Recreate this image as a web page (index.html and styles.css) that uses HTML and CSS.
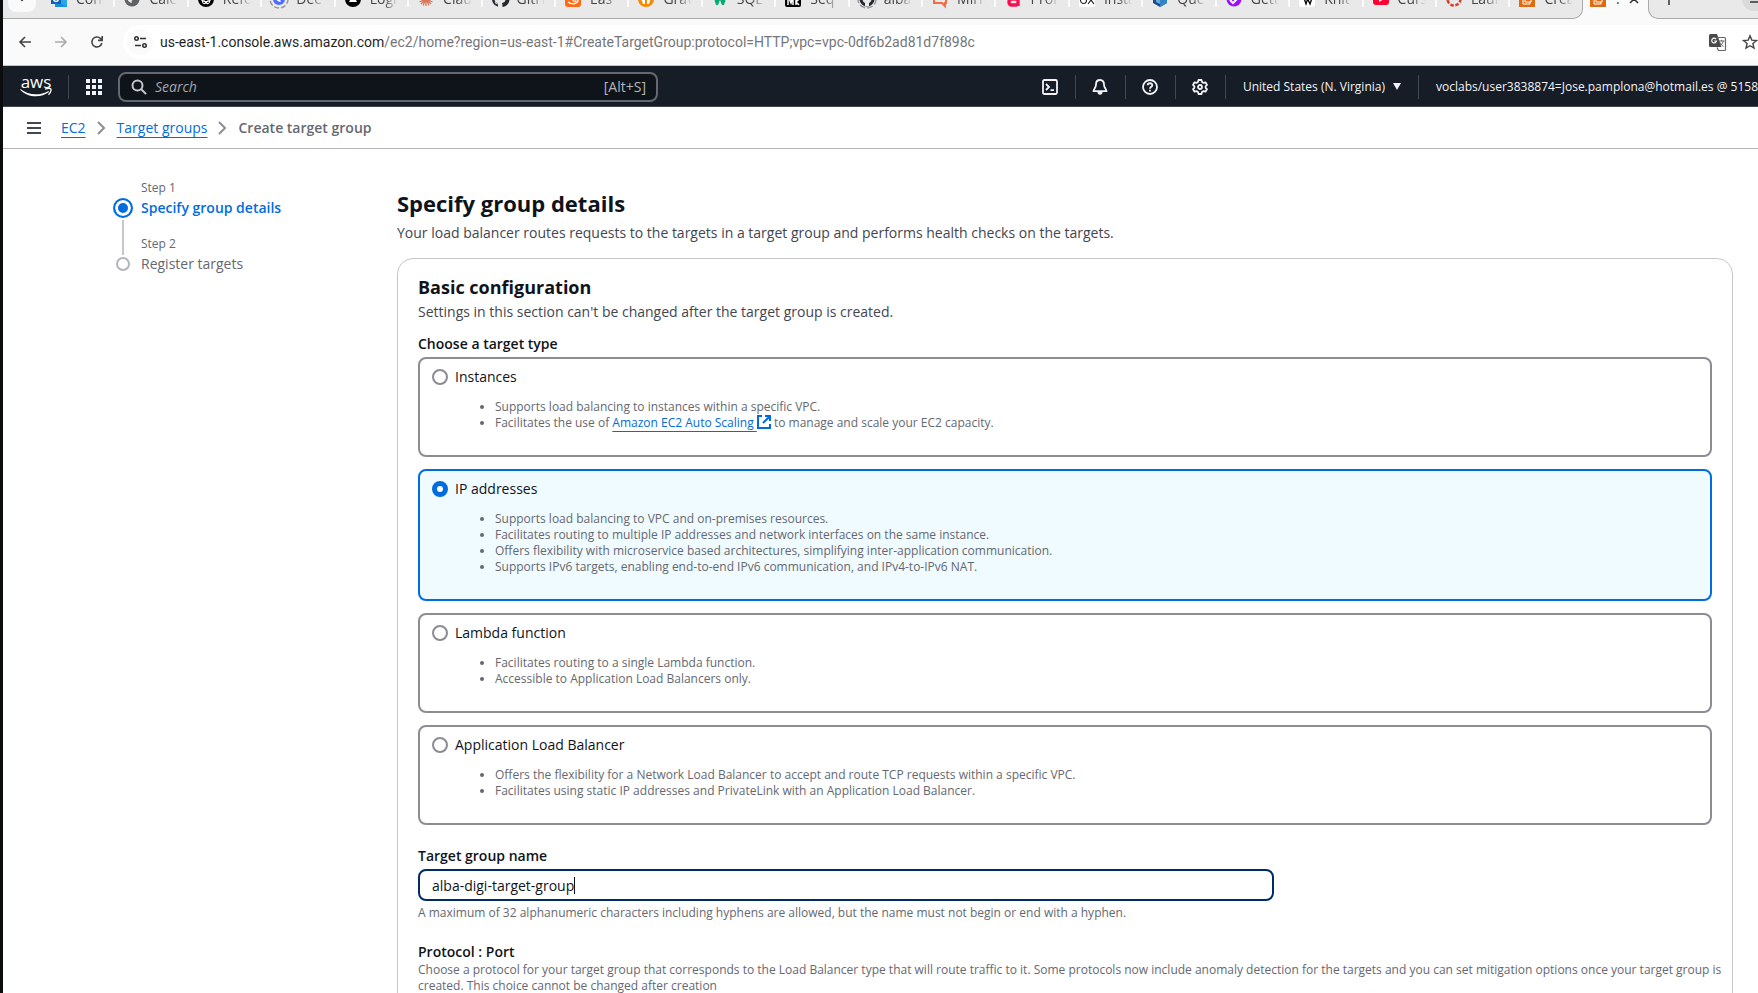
FILE: index.html
```html
<!DOCTYPE html>
<html lang="en">
<head>
<meta charset="utf-8">
<title>Create target group | EC2 | us-east-1</title>
<link rel="stylesheet" href="styles.css">
</head>
<body>
<div class="window">
  <div class="tabstrip">
    <button class="tab-search" aria-label="Search tabs"><svg width="28" height="28" viewBox="0 0 28 28"><rect width="28" height="28" rx="8" fill="#fafafa"/><path d="M10 12l4 4 4-4" fill="none" stroke="#333" stroke-width="2"/></svg></button>
    <div class="tabs">
      <button class="tab"><svg class="fav" viewBox="0 0 16 16"><path d="M4 0h12v16H4z" fill="#28a8ea"/><path d="M4 9l12 7H4z" fill="#1490df"/><path d="M0 3h10v10H0z" fill="#0f5fb5"/><circle cx="5" cy="8" r="2.4" fill="none" stroke="#fff" stroke-width="1.5"/></svg><span class="tab-text">Conf</span></button>
      <button class="tab"><svg class="fav" viewBox="0 0 16 16"><circle cx="8" cy="8" r="7.5" fill="#5f6368"/><path d="M8 3c4 0 4 3 2 5s-3 1-2 4c-4-1-5-4-5-6z" fill="#eee"/></svg><span class="tab-text">Calc</span></button>
      <button class="tab"><svg class="fav" viewBox="0 0 16 16"><circle cx="8" cy="8" r="8" fill="#000"/><g fill="none" stroke="#fff"><ellipse cx="8" cy="8" rx="5" ry="2.6"/><ellipse cx="8" cy="8" rx="5" ry="2.6" transform="rotate(60 8 8)"/><ellipse cx="8" cy="8" rx="5" ry="2.6" transform="rotate(120 8 8)"/></g></svg><span class="tab-text">Refe</span></button>
      <button class="tab"><svg class="fav" viewBox="0 0 16 16"><circle cx="8" cy="8" r="9" fill="none" stroke="#999" stroke-width="1.5" stroke-dasharray="5 2"/><circle cx="8" cy="8" r="6" fill="#4d6bfe"/><path d="M4 5c3 0 5 3 6 6-3 0-6-2-6-6z" fill="#fff"/></svg><span class="tab-text">Dee</span></button>
      <button class="tab"><svg class="fav" viewBox="0 0 16 16"><circle cx="8" cy="8" r="8" fill="#000"/><path d="M8 3l4 8H4z" fill="#fff"/></svg><span class="tab-text">Logi</span></button>
      <button class="tab"><svg class="fav" viewBox="0 0 16 16"><path d="M8 1v14M1 8h14M3 3l10 10M13 3L3 13M5 1.500l6 13M11 1.500l-6 13M1.500 5l13 6M1.500 11l13-6" stroke="#d97757" stroke-width="1.3"/></svg><span class="tab-text">Clau</span></button>
      <button class="tab"><svg class="fav" viewBox="0 0 16 16"><path d="M8 0a8 8 0 0 0-2.500 15.600c.4 0 .5-.2.5-.4v-2C3.700 13.700 3.300 12 3.300 12c-.4-.9-1-1.200-1-1.200 1-.4 1.900 1 1.900 1 .6 1.100 1.700.8 2.100.6-1.800-.6-3.800-1.200-3.800-4.300 0-3 2-4.200 5.500-4.200s5.500 1.200 5.500 4.200-2 3.800-3.700 4c.3.300.6.800.6 1.600v1.900c0 .2.100.4.5.4A8 8 0 0 0 8 0z" fill="#24292f"/></svg><span class="tab-text">GitH</span></button>
      <button class="tab"><svg class="fav" viewBox="0 0 16 16"><rect width="16" height="16" rx="3" fill="#ff6a13"/><path d="M3 11c4 3 9 2 10-1 1-4-5-4-5-1 0 2 3 2 3 0" fill="none" stroke="#fff" stroke-width="1.300"/></svg><span class="tab-text">Eas</span></button>
      <button class="tab"><svg class="fav" viewBox="0 0 16 16"><circle cx="8" cy="8" r="8" fill="#f58a07"/><path d="M3 7h4v6H5zM9 7h4l-2 6H9z" fill="#fff"/></svg><span class="tab-text">Grav</span></button>
      <button class="tab"><svg class="fav" viewBox="0 0 16 16"><path d="M1 4h3l1.500 5L7 4h2l1.500 5L12 4h3l-3 10h-2L8 9l-2 5H4z" fill="#04aa6d"/></svg><span class="tab-text">SQL</span></button>
      <button class="tab"><svg class="fav" viewBox="0 0 16 16"><rect width="16" height="16" rx="2" fill="#000"/><path d="M3 14V5l3 7 2-7v9M11 14V5M14 8l-3 3 3 3" stroke="#fff" fill="none" stroke-width="1.500"/></svg><span class="tab-text">Seq</span></button>
      <button class="tab"><svg class="fav" viewBox="0 0 16 16"><circle cx="8" cy="8" r="9" fill="none" stroke="#999" stroke-width="1.500" stroke-dasharray="6 2"/><circle cx="8" cy="8" r="6" fill="none" stroke="#24292f" stroke-width="3"/><path d="M6 15v-3h4v3z" fill="#eee"/></svg><span class="tab-text">alba</span></button>
      <button class="tab"><svg class="fav" viewBox="0 0 16 16"><path d="M2 2h12v10h-1v3l-3-3H2z" fill="none" stroke="#f26b43" stroke-width="2"/></svg><span class="tab-text">Miriv</span></button>
      <button class="tab"><svg class="fav" viewBox="0 0 16 16"><path d="M4 4h6q3 0 3 3v8M12 8H7q-3 0-3 3t3 3h5" fill="none" stroke="#f5114f" stroke-width="3.400"/></svg><span class="tab-text">Prof</span></button>
      <button class="tab"><svg class="fav" viewBox="0 0 16 16"><path d="M0 0h16v16H0z" fill="#fff"/><ellipse cx="4.500" cy="9" rx="3" ry="3.500" fill="none" stroke="#222" stroke-width="1.200"/><path d="M9 5l6 8M15 5l-6 8" stroke="#222" stroke-width="1.200"/></svg><span class="tab-text">Insta</span></button>
      <button class="tab"><svg class="fav" viewBox="0 0 16 16"><path d="M8 0l7 4v8l-7 4-7-4V4z" fill="#1a4f86"/><path d="M8 8l7-4v8l-7 4z" fill="#3584c6"/><path d="M4 6l4 2v5l-4-2z" fill="#67a9dd"/></svg><span class="tab-text">Que</span></button>
      <button class="tab"><svg class="fav" viewBox="0 0 16 16"><circle cx="8" cy="8" r="7.500" fill="#9810fa"/><path d="M4 9l3 3 6-6" fill="none" stroke="#fff" stroke-width="2"/></svg><span class="tab-text">Gett</span></button>
      <button class="tab"><svg class="fav" viewBox="0 0 16 16"><rect width="16" height="16" rx="3" fill="#fff"/><path d="M2 4h4M7 4h3M12 4h2M4 4l3 9 2-6M7 4l4 9 3-9" fill="none" stroke="#000" stroke-width="1.300"/></svg><span class="tab-text">Knit</span></button>
      <button class="tab"><svg class="fav" viewBox="0 0 16 16"><rect y="2" width="16" height="12" rx="3" fill="#f03"/><path d="M6 5l5 3-5 3z" fill="#fff"/></svg><span class="tab-text">Curs</span></button>
      <button class="tab"><svg class="fav" viewBox="0 0 16 16"><circle cx="8" cy="8" r="6.500" fill="none" stroke="#e03a2d" stroke-width="2.500" stroke-dasharray="3.500 1.600"/></svg><span class="tab-text">Laun</span></button>
      <button class="tab"><svg class="fav" viewBox="0 0 16 16"><path d="M0 0h16v16H0z" fill="#dd6b10"/><path d="M4 6v7h7v-2M6 4v7h6V7" fill="none" stroke="#fff"/></svg><span class="tab-text">Crea</span></button>
    </div>
    <button class="tab tab-active"><svg class="fav" viewBox="0 0 16 16"><path d="M0 0h16v16H0z" fill="#dd6b10"/><path d="M4 6v7h7v-2M6 4v7h6V7" fill="none" stroke="#fff"/></svg><span class="tab-dot">:</span><svg width="8" height="8" viewBox="0 0 8 8"><path d="M0 0l8 8M8 0L0 8" stroke="#333" stroke-width="1.500"/></svg></button>
    <div class="tab-rest">
      <button class="tab-new" aria-label="New tab"><svg width="12" height="12" viewBox="0 0 12 12"><path d="M6 0v12M0 6h12" stroke="#333" stroke-width="1.500"/></svg></button>
      <button class="tab-min" aria-label="Minimize"><svg width="8" height="8" viewBox="0 0 8 8"><path d="M0 7h8" stroke="#333" stroke-width="1.500"/></svg></button>
    </div>
  </div>

  <div class="toolbar">
    <button class="tool" aria-label="Back"><svg width="12" height="12" viewBox="0 0 12 12"><path d="M12 6H1M6 1L1 6l5 5" fill="none" stroke="#444" stroke-width="1.600"/></svg></button>
    <button class="tool" aria-label="Forward"><svg width="12" height="12" viewBox="0 0 12 12"><path d="M0 6h11M6 1l5 5-5 5" fill="none" stroke="#aaa" stroke-width="1.600"/></svg></button>
    <button class="tool" aria-label="Reload"><svg width="12" height="12" viewBox="0 0 12 12"><path d="M10.800 7A5 5 0 1 1 9.500 2.500L11 4M11.200 0v4.400H7" fill="none" stroke="#444" stroke-width="1.600"/></svg></button>
    <div class="omnibox">
      <button class="site-info" aria-label="Site information"><svg width="13" height="12" viewBox="0 0 13 12"><g fill="none" stroke="#333" stroke-width="1.600"><circle cx="2.500" cy="2.500" r="1.700"/><circle cx="10.500" cy="9.500" r="1.700"/><path d="M6 2.500h6M1 9.500h6"/></g></svg></button>
      <span class="url"><span class="url-host">us-east-1.console.aws.amazon.com</span>/ec2/home?region=us-east-1#CreateTargetGroup:protocol=HTTP;vpc=vpc-0df6b2ad81d7f898c</span>
      <button class="omni-btn" aria-label="Translate"><svg width="17" height="17" viewBox="0 0 17 17"><path d="M1.500 0H8l4.500 13h-11Q0 13 0 11.500v-10Q0 0 1.500 0z" fill="#4a4a4a"/><path d="M8.500 3.500h7q1 0 1 1v11q0 1-1 1H9.500L8 13.500" fill="none" stroke="#666" stroke-width="1.200"/><path d="M7 5A2.400 2.400 0 1 0 7.500 7H5.200" fill="none" stroke="#fff" stroke-width="1.200"/><path d="M9.500 7h6M12.500 5.800V7M14.500 7q-1 3-3.500 5M11 8.500q1 2.500 3.500 4" fill="none" stroke="#666"/></svg></button>
      <button class="omni-btn" aria-label="Bookmark"><svg width="16" height="16" viewBox="0 0 16 16"><path d="M8 1.800l1.800 4.300 4.700.4-3.600 3 1.100 4.600L8 11.700l-4 2.400 1.100-4.600-3.600-3 4.700-.4z" fill="none" stroke="#444" stroke-width="1.400"/></svg></button>
    </div>
  </div>

  <header class="console-bar">
    <a class="logo" href="#" aria-label="AWS home"><span class="logo-word">aws</span><svg class="logo-smile" width="32" height="10" viewBox="0 0 32 10"><path d="M.5 1C8 7.500 20 8 28.500 3l.5 1C21 10 8 10 .2 1.700z" fill="#fff"/><path d="M25 1.200c3-1 5.500-.8 6 0 .4 1-.7 4-2.500 5.600" fill="none" stroke="#fff" stroke-width="1.300"/></svg></a>
    <span class="sep"></span>
    <button class="bar-btn grid-btn" aria-label="Services"><svg width="16" height="16" viewBox="0 0 16 16" fill="#f3f3f7"><path d="M0 0h4v4H0zM6 0h4v4H6zM12 0h4v4h-4zM0 6h4v4H0zM6 6h4v4H6zM12 6h4v4h-4zM0 12h4v4H0zM6 12h4v4H6zM12 12h4v4h-4z"/></svg></button>
    <label class="search"><svg width="16" height="16" viewBox="0 0 16 16"><g fill="none" stroke="#c6c6cd" stroke-width="2"><circle cx="6.500" cy="6.500" r="5"/><path d="M10 10l5 5"/></g></svg><input class="search-input" type="text" placeholder="Search" aria-label="Search"><span class="search-key">[Alt+S]</span></label>
    <div class="bar-right">
      <button class="bar-btn" aria-label="CloudShell"><svg width="16" height="16" viewBox="0 0 16 16"><g fill="none" stroke="#f3f3f7" stroke-width="1.800"><rect x="1" y="1" width="14" height="14" rx="1.500"/><path d="M4 5l3 3-3 3M8.500 11.200H12"/></g></svg></button>
      <span class="sep"></span>
      <button class="bar-btn" aria-label="Notifications"><svg width="16" height="16" viewBox="0 0 16 16"><path d="M8 1C5 1 4 3 4 5.500 4 9 1.500 10 1.500 12.200h13C14.500 10 12 9 12 5.500 12 3 11 1 8 1z" fill="none" stroke="#f3f3f7" stroke-width="1.800" stroke-linejoin="round"/><path d="M5.500 13a2.500 2.700 0 0 0 5 0z" fill="#f3f3f7"/></svg></button>
      <span class="sep"></span>
      <button class="bar-btn" aria-label="Help"><svg width="16" height="16" viewBox="0 0 16 16"><g fill="none" stroke="#f3f3f7" stroke-width="1.800"><circle cx="8" cy="8" r="7"/><path d="M5.600 6.300C5.800 3.600 10.300 3.600 10.300 6.200 10.300 7.800 8 7.800 8 9.700"/><path d="M8 10.800v1.800"/></g></svg></button>
      <span class="sep"></span>
      <button class="bar-btn" aria-label="Settings"><svg width="16" height="16" viewBox="0 0 16 16"><g fill="none" stroke="#f3f3f7" stroke-width="1.800" stroke-linejoin="round"><path d="M6.500 1h3l.5 2 1.500.9 2-.6 1.500 2.600L13.600 7.300v1.500L15 10.100l-1.500 2.600-2-.6-1.500.9-.5 2h-3L6 13l-1.500-.9-2 .6L1 10.100l1.400-1.300V7.300L1 5.900l1.500-2.600 2 .6L6 3z"/><circle cx="8" cy="8" r="2"/></g></svg></button>
      <span class="sep"></span>
      <button class="bar-text">United States (N. Virginia)<svg width="8" height="7" viewBox="0 0 8 7"><path d="M0 0h8L4 7z" fill="#f3f3f7"/></svg></button>
      <span class="sep"></span>
      <button class="bar-text bar-user">voclabs/user3838874=Jose.pamplona@hotmail.es @ 5158</button>
    </div>
  </header>

  <nav class="crumbs" aria-label="Breadcrumbs">
    <button class="menu-btn" aria-label="Open navigation"><svg width="14" height="12" viewBox="0 0 14 12"><path d="M0 1h14M0 6h14M0 11h14" stroke="#424650" stroke-width="2"/></svg></button>
    <a class="link" href="#">EC2</a>
    <svg class="chev" width="9" height="14" viewBox="0 0 9 14"><path d="M1 1l6 6-6 6" fill="none" stroke="#8c8c94" stroke-width="2"/></svg>
    <a class="link" href="#">Target groups</a>
    <svg class="chev" width="9" height="14" viewBox="0 0 9 14"><path d="M1 1l6 6-6 6" fill="none" stroke="#8c8c94" stroke-width="2"/></svg>
    <span class="crumb-current">Create target group</span>
  </nav>

  <div class="page">
    <ol class="steps">
      <li class="step step-current"><span class="step-no">Step 1</span><span class="mark"></span><span class="step-name">Specify group details</span></li>
      <li class="step"><span class="step-no">Step 2</span><span class="mark"></span><span class="step-name">Register targets</span></li>
    </ol>
    <main>
      <h1 class="title">Specify group details</h1>
      <p class="lead">Your load balancer routes requests to the targets in a target group and performs health checks on the targets.</p>
      <section class="card">
        <h2 class="card-title">Basic configuration</h2>
        <p class="card-lead">Settings in this section can't be changed after the target group is created.</p>
        <fieldset class="tiles">
          <legend class="field-label">Choose a target type</legend>
          <div class="tile">
            <label class="tile-label"><input class="radio" type="radio" name="type">Instances</label>
            <ul class="notes"><li>Supports load balancing to instances within a specific VPC.</li><li>Facilitates the use of <a class="link" href="#">Amazon EC2 Auto Scaling </a><svg class="ext" width="14" height="14" viewBox="0 0 14 14"><path d="M5 1H1v12h12V9M8 1h5v5M13 1L6 8" fill="none" stroke="#006ce0" stroke-width="2"/></svg> to manage and scale your EC2 capacity.</li></ul>
          </div>
          <div class="tile tile-on">
            <label class="tile-label"><input class="radio" type="radio" name="type" checked>IP addresses</label>
            <ul class="notes"><li>Supports load balancing to VPC and on-premises resources.</li><li>Facilitates routing to multiple IP addresses and network interfaces on the same instance.</li><li>Offers flexibility with microservice based architectures, simplifying inter-application communication.</li><li>Supports IPv6 targets, enabling end-to-end IPv6 communication, and IPv4-to-IPv6 NAT.</li></ul>
          </div>
          <div class="tile">
            <label class="tile-label"><input class="radio" type="radio" name="type">Lambda function</label>
            <ul class="notes"><li>Facilitates routing to a single Lambda function.</li><li>Accessible to Application Load Balancers only.</li></ul>
          </div>
          <div class="tile">
            <label class="tile-label"><input class="radio" type="radio" name="type">Application Load Balancer</label>
            <ul class="notes"><li>Offers the flexibility for a Network Load Balancer to accept and route TCP requests within a specific VPC.</li><li>Facilitates using static IP addresses and PrivateLink with an Application Load Balancer.</li></ul>
          </div>
        </fieldset>
        <div class="field">
          <label class="field-label" for="group-name">Target group name</label>
          <div class="thirds"><div class="textbox"><input class="textbox-input" id="group-name" type="text" value="alba-digi-target-group"><span class="caret"></span></div></div>
          <p class="hint">A maximum of 32 alphanumeric characters including hyphens are allowed, but the name must not begin or end with a hyphen.</p>
        </div>
        <div class="field">
          <h3 class="field-label">Protocol : Port</h3>
          <p class="hint-top">Choose a protocol for your target group that corresponds to the Load Balancer type that will route traffic to it. Some protocols now include anomaly detection for the targets and you can set mitigation options once your target group is created. This choice cannot be changed after creation</p>
        </div>
      </section>
    </main>
  </div>
</div>
</body>
</html>
```
FILE: styles.css
```css
* { box-sizing: border-box; }
html { height: 100%; overflow: hidden; }
body {
  margin: 0;
  height: 100%;
  overflow: hidden;
  background: #0b0c0e;
  padding-left: 3px;
  font: 14px/20px "Open Sans", "Noto Sans", sans-serif;
  color: #0f141a;
}
button { border: 0; padding: 0; background: none; font: inherit; color: inherit; display: flex; align-items: center; }
svg { display: block; flex: none; overflow: visible; }
h1, h2, h3, p, ol, ul, fieldset, legend { margin: 0; padding: 0; border: 0; }
.window { background: #fff; min-height: 100%; }

/* browser tabs */
.tabstrip { display: flex; align-items: flex-end; height: 19px; overflow: hidden; background: #fafafa; font-size: 14px; color: #444; }
.tab-search { width: 37px; height: 40px; padding: 0 4px 2px 5px; flex: none; background: #e9e9e9; border-bottom: 1px solid #aaa; }
.tabs { display: flex; flex: 1; min-width: 0; height: 40px; background: #e9e9e9; border-bottom: 1px solid #aaa; border-right: 1px solid #aaa; border-bottom-right-radius: 10px; }
.tab { flex: 1 1 0; min-width: 0; height: 40px; padding: 0 2px 0 11px; gap: 9px; overflow: hidden; }
.fav { width: 16px; height: 16px; }
.tab-text { flex: 1; min-width: 0; overflow: hidden; text-align: left; white-space: nowrap; mask-image: linear-gradient(to right, #000 40%, transparent 80%); }
.tabs .tab + .tab { background: linear-gradient(#fafafa, #fafafa) no-repeat left 17px / 2px 11px; }
.tab-active { flex: none; width: 65px; padding-left: 7px; gap: 10px; }
.tab-dot { line-height: 20px; }
.tab-rest { display: flex; flex: none; width: 110px; height: 40px; justify-content: space-between; align-items: center; padding-left: 14px; background: #e9e9e9; border-bottom: 1px solid #aaa; border-left: 1px solid #aaa; border-bottom-left-radius: 10px; overflow: hidden; }
.tab-min { width: 16px; height: 24px; padding-left: 8px; background: #dadada; border-radius: 12px 0 0 12px; }

/* address bar */
.toolbar { display: flex; align-items: center; height: 47px; background: #fafafa; border-bottom: 1px solid #c4c4c4; padding-left: 4px; }
.tool { width: 36px; height: 36px; justify-content: center; }
.omnibox { display: flex; align-items: center; flex: 1; min-width: 0; height: 34px; margin-left: 8px; padding-left: 4px; background: #fff; border-radius: 17px 0 0 17px; }
.site-info { width: 26px; height: 26px; justify-content: center; background: #fafafa; border-radius: 13px; margin-right: 7px; }
.url { flex: 1; min-width: 0; font-family: Roboto, "Open Sans", sans-serif; font-size: 14px; color: #75757a; white-space: nowrap; }
.url-host { color: #1f1f1f; }
.omni-btn { margin-left: 16px; }

/* console bar */
.console-bar { display: flex; align-items: center; height: 41px; background: #161d26; border-bottom: 1px solid #424650; color: #f3f3f7; padding: 1px 0 0 17px; }
.logo { display: flex; flex-direction: column; width: 32px; color: #fff; text-decoration: none; align-items: center; }
.logo-word { font-size: 17px; line-height: 12px; height: 12px; }
.sep { width: 1px; height: 24px; background: #424650; }
.logo + .sep { margin-left: 16px; }
.bar-btn { width: 49px; height: 38px; justify-content: center; }
.search { display: flex; align-items: center; width: 540px; height: 30px; border: 2px solid #656871; border-radius: 8px; background: #0f141a; padding: 0 10px 0 11px; gap: 8px; }
.search-input { flex: 1; min-width: 0; border: 0; outline: 0; padding: 0; background: none; font: inherit; font-style: italic; color: #fff; }
.search-input::placeholder { color: #a4a4ad; opacity: 1; }
.search-key { color: #b4b4bb; }
.bar-right { display: flex; align-items: center; margin-left: auto; }
.bar-text { height: 38px; padding: 0 17px; gap: 8px; font-size: 12px; font-weight: 500; white-space: nowrap; }
.bar-user { padding-right: 0; }

/* breadcrumbs */
.crumbs { display: flex; align-items: center; height: 42px; border-bottom: 1px solid #b4b4bb; padding: 1px 0 0 24px; gap: 11px; }
.menu-btn { margin-right: 9px; }
.link { color: #006ce0; text-decoration: underline; text-decoration-thickness: 1px; text-underline-offset: 4px; }
.crumb-current { font-weight: 600; color: #656871; }

/* page */
.page { display: grid; grid-template-columns: 264px minmax(0, 1fr); gap: 20px; padding: 0 25px 0 110px; }
.steps { list-style: none; padding-top: 31px; color: #656871; }
.step { position: relative; display: grid; grid-template-columns: 20px 1fr; column-gap: 8px; row-gap: 2px; align-items: center; }
.step + .step { margin-top: 18px; }
.step-no { grid-column: 2; font-size: 12px; line-height: 16px; }
.mark { width: 14px; height: 14px; border: 2px solid #b4b4bb; border-radius: 50%; justify-self: center; }
.step-current .mark { width: 20px; height: 20px; border-color: #006ce0; background: #006ce0; box-shadow: inset 0 0 0 3px #fff; }
.step-current .step-name { color: #006ce0; font-weight: 600; }
.step-current::after { content: ""; position: absolute; left: 9px; top: 40px; width: 2px; height: 35px; background: #c6c6cd; }
main { padding-top: 39px; }
.title { font-size: 22px; line-height: 30px; font-weight: 700; }
.lead { margin-top: 5px; color: #424650; }
.card { margin-top: 15px; padding: 16px 20px; border: 1px solid #c6c6cd; border-radius: 16px; }
.card-title { font-size: 18px; line-height: 24px; font-weight: 700; }
.card-lead { margin-top: 3px; color: #424650; }
.field-label { display: block; font-size: 14px; line-height: 20px; font-weight: 600; margin-bottom: 3px; }
.tiles { display: flex; flex-direction: column; gap: 12px; margin-top: 12px; }
.tile { padding: 8px 12px; border: 2px solid #8c8c94; border-radius: 8px; }
.tile-on { border-color: #006ce0; background: #f0fbff; }
.tile-label { display: flex; align-items: center; gap: 7px; }
.radio { appearance: none; width: 16px; height: 16px; margin: 0; border: 2px solid #8c8c94; border-radius: 50%; background: #fff; }
.radio:checked { border: 5px solid #006ce0; }
.notes { margin: 12px 0 16px; padding-left: 63px; font-size: 12px; line-height: 16px; color: #656871; }
.ext { display: inline-block; vertical-align: -2px; }
.field { margin-top: 21px; }
.thirds { display: grid; grid-template-columns: repeat(3, 1fr); gap: 20px; }
.textbox { grid-column: span 2; display: flex; align-items: center; height: 32px; border: 2px solid #002b66; border-radius: 8px; padding: 1px 12px 0; }
.textbox-input { field-sizing: content; border: 0; outline: 0; padding: 0; background: none; font: inherit; color: inherit; }
.caret { width: 1px; height: 17px; background: #0f141a; }
.hint { margin-top: 4px; font-size: 12px; line-height: 16px; color: #656871; }
h3.field-label { margin: 0; }
.hint-top { margin-right: -16px; font-size: 12px; line-height: 16px; color: #656871; }
```
